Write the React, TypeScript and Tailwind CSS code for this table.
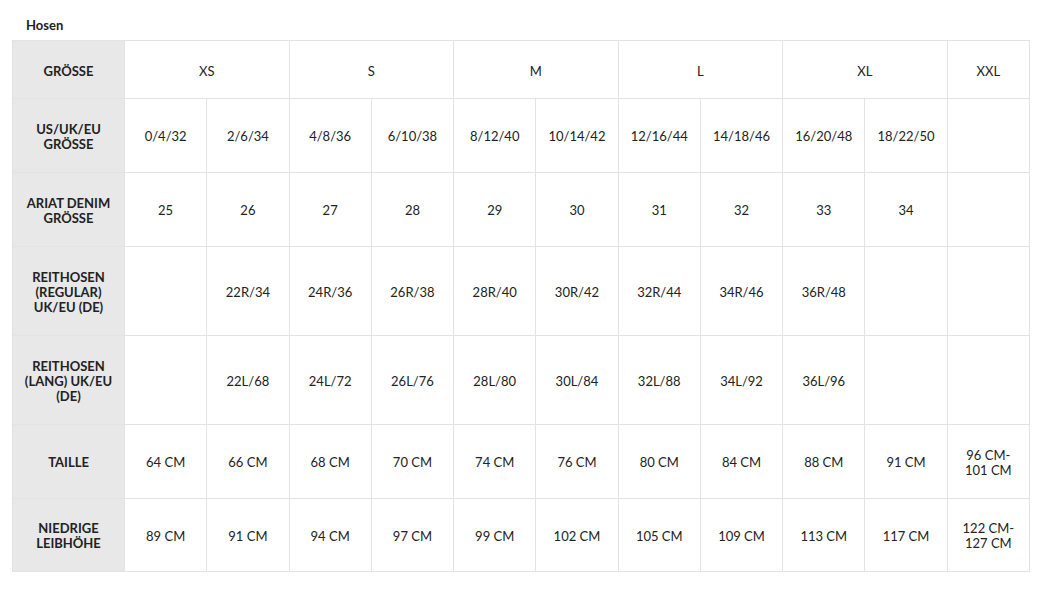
import React from 'react';

const groups = ['XS', 'S', 'M', 'L', 'XL'];

const rows: { label: string; cells: string[] }[] = [
  {
    label: 'US/UK/EU GRÖSSE',
    cells: ['0/4/32', '2/6/34', '4/8/36', '6/10/38', '8/12/40', '10/14/42', '12/16/44', '14/18/46', '16/20/48', '18/22/50', ''],
  },
  {
    label: 'ARIAT DENIM GRÖSSE',
    cells: ['25', '26', '27', '28', '29', '30', '31', '32', '33', '34', ''],
  },
  {
    label: 'REITHOSEN (REGULAR) UK/EU (DE)',
    cells: ['', '22R/34', '24R/36', '26R/38', '28R/40', '30R/42', '32R/44', '34R/46', '36R/48', '', ''],
  },
  {
    label: 'REITHOSEN (LANG) UK/EU (DE)',
    cells: ['', '22L/68', '24L/72', '26L/76', '28L/80', '30L/84', '32L/88', '34L/92', '36L/96', '', ''],
  },
  {
    label: 'TAILLE',
    cells: ['64 CM', '66 CM', '68 CM', '70 CM', '74 CM', '76 CM', '80 CM', '84 CM', '88 CM', '91 CM', '96 CM- 101 CM'],
  },
  {
    label: 'NIEDRIGE LEIBHÖHE',
    cells: ['89 CM', '91 CM', '94 CM', '97 CM', '99 CM', '102 CM', '105 CM', '109 CM', '113 CM', '117 CM', '122 CM- 127 CM'],
  },
];

const rowHeights = ['h-[74px]', 'h-[74px]', 'h-[89px]', 'h-[89px]', 'h-[74px]', 'h-[73px]'];

export default function App() {
  return (
    <div className="w-[1043px] h-[591px] bg-white pl-3 pr-[13px] pt-[17px] text-[#222] font-['Lato','Liberation_Sans',sans-serif]">
      <h3 className="pl-[14px] text-[13px] font-bold leading-[16px] mb-[7px]">Hosen</h3>
      <table className="w-[1018px] table-fixed border-collapse text-[13px] leading-[15px] text-center">
        <colgroup>
          <col className="w-[112px]" />
          {Array.from({ length: 11 }).map((_, i) => (
            <col key={i} />
          ))}
        </colgroup>
        <tbody>
          <tr className="h-[58px]">
            <th className="bg-[#e8e8e8] border border-[#e3e3e3] font-bold px-2 pt-[4px]">GRÖSSE</th>
            {groups.map((g) => (
              <td key={g} colSpan={2} className="border border-[#e3e3e3] pt-[4px]">
                {g}
              </td>
            ))}
            <td className="border border-[#e3e3e3] pt-[4px]">XXL</td>
          </tr>
          {rows.map((r, ri) => (
            <tr key={r.label} className={rowHeights[ri]}>
              <th className="bg-[#e8e8e8] border border-[#e3e3e3] font-bold px-2 pt-[2px]">{r.label}</th>
              {r.cells.map((c, ci) => (
                <td key={ci} className="border border-[#e3e3e3] px-3 pt-[2px]">
                  {c}
                </td>
              ))}
            </tr>
          ))}
        </tbody>
      </table>
    </div>
  );
}
